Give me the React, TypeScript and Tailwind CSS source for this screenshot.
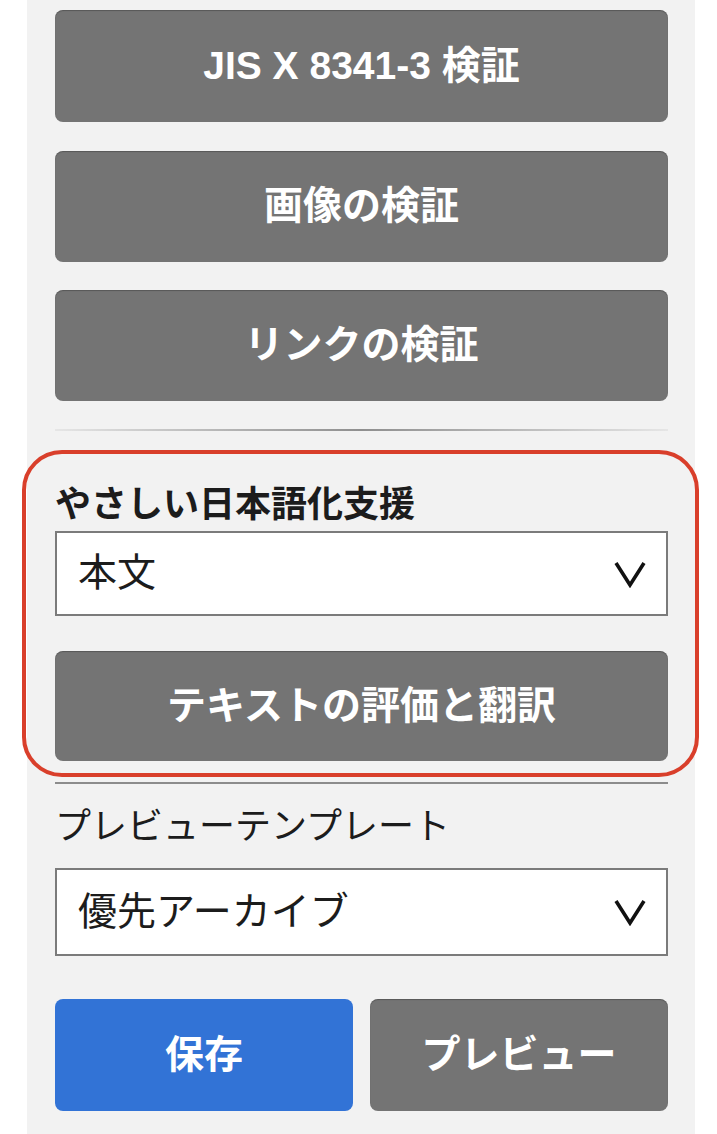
import React from 'react';

const font = "font-['Liberation_Sans','Noto_Sans_CJK_JP',sans-serif]";

const GrayButton = ({ label, className = '' }: { label: string; className?: string }) => (
  <button
    className={`flex w-full items-center justify-center rounded-[8px] bg-[#747474] text-[39px] font-bold text-white shadow-[inset_0_1px_1px_rgba(0,0,0,0.25)] ${className}`}
  >
    {label}
  </button>
);

const Chevron = () => (
  <svg width="34" height="28" viewBox="0 0 34 28" fill="none">
    <path d="M3 3 L17 25 L31 3" stroke="#111" strokeWidth="3.6" strokeLinejoin="miter" />
  </svg>
);

const SelectBox = ({ value, className = '' }: { value: string; className?: string }) => (
  <div
    className={`flex w-full items-center justify-between border-2 border-[#7b7b7b] bg-white pl-[21px] pr-[19px] text-[39px] text-[#1c1c1c] ${className}`}
  >
    <span>{value}</span>
    <Chevron />
  </div>
);

export default function App() {
  return (
    <div className={`min-h-[1134px] bg-white ${font}`}>
      <div className="relative ml-[27px] min-h-[1134px] w-[668px] bg-[#f2f2f2] pb-[20px] pl-[28px] pr-[27px] pt-[10px]">
        {/* Validation buttons */}
        <GrayButton label="JIS X 8341-3 検証" className="h-[112px]" />
        <GrayButton label="画像の検証" className="mt-[29px] h-[111px]" />
        <GrayButton label="リンクの検証" className="mt-[28px] h-[111px]" />

        <div className="mt-[28px] h-[2px] bg-gradient-to-r from-[#e6e6e6] via-[#8f8f8f] to-[#e6e6e6]" />

        {/* Easy Japanese support */}
        <div className="mt-[48px] h-[52px] text-[36px] font-bold leading-[52px] text-[#1c1c1c]">
          やさしい日本語化支援
        </div>
        <SelectBox value="本文" className="h-[85px]" />
        <GrayButton label="テキストの評価と翻訳" className="mt-[35px] h-[110px]" />

        <div className="mt-[21px] h-[2px] bg-[#8c8c8c]" />

        {/* Preview template */}
        <div className="mt-[18px] h-[50px] text-[36px] leading-[50px] text-[#1c1c1c]">
          プレビューテンプレート
        </div>
        <SelectBox value="優先アーカイブ" className="mt-[16px] h-[88px]" />

        <div className="mt-[43px] flex gap-[17px]">
          <button className="flex h-[112px] flex-1 items-center justify-center rounded-[8px] bg-[#3273d6] text-[39px] font-bold text-white">
            保存
          </button>
          <GrayButton label="プレビュー" className="h-[112px] flex-1" />
        </div>

        {/* Highlight annotation */}
        <div className="pointer-events-none absolute left-[-5px] top-[450px] h-[327px] w-[677px] rounded-[40px] border-4 border-[#d93f2b]" />
      </div>
    </div>
  );
}
